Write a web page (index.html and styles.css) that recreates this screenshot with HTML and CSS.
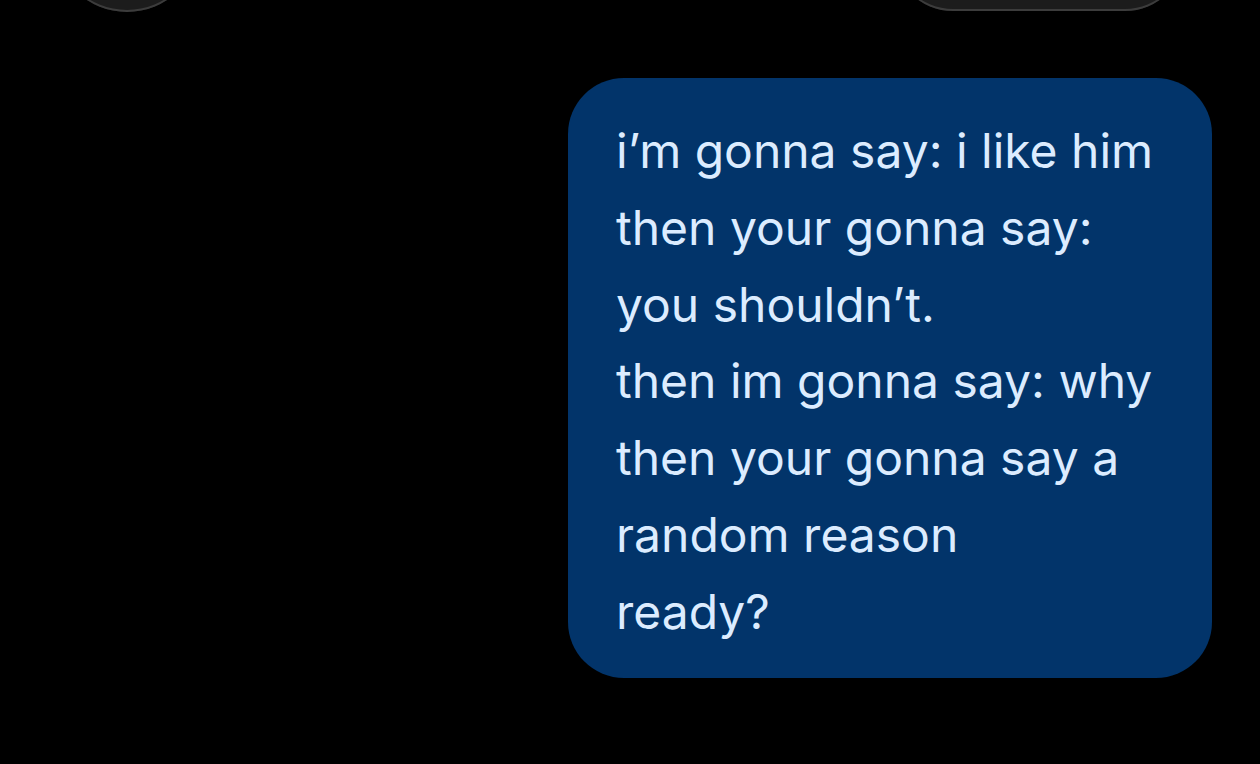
FILE: index.html
```html
<!DOCTYPE html>
<html>
<head>
<meta charset="utf-8">
<link rel="stylesheet" href="styles.css">
</head>
<body>
<header class="topbar">
  <div class="back-btn"></div>
  <div class="contact-pill"></div>
</header>
<main class="thread">
  <div class="bubble sent">
    <div class="line">i’m gonna say: i like him</div>
    <div class="line">then your gonna say:</div>
    <div class="line">you shouldn’t.</div>
    <div class="line">then im gonna say: why</div>
    <div class="line">then your gonna say a</div>
    <div class="line">random reason</div>
    <div class="line">ready?</div>
  </div>
</main>
</body>
</html>
```
FILE: styles.css
```css
html, body {
  margin: 0;
  padding: 0;
  background: #000;
  width: 1260px;
  height: 764px;
  overflow: hidden;
}
body {
  position: relative;
  font-family: Inter, "Liberation Sans", Arial, sans-serif;
}
.topbar {
  position: absolute;
  top: 0;
  left: 0;
  width: 100%;
  height: 0;
}
.back-btn {
  position: absolute;
  left: 54px;
  top: -134px;
  width: 146px;
  height: 146px;
  border-radius: 50%;
  background: #1c1c1c;
  box-shadow: inset 0 -1px 0 1px #3c3c3c;
}
.contact-pill {
  position: absolute;
  left: 893px;
  top: -110px;
  width: 292px;
  height: 121px;
  border-radius: 60px;
  background: #1c1c1c;
  box-shadow: inset 0 -1px 0 1px #3c3c3c;
}
.thread {
  display: flex;
  flex-direction: column;
  align-items: flex-end;
  padding: 78px 48px 0 0;
}
.bubble {
  box-sizing: border-box;
  width: 644px;
  height: 600px;
  padding: 35px 20px 0 48px;
  border-radius: 56px;
  background: #02346a;
  color: #dcecff;
  font-size: 48px;
  line-height: 76.8px;
  white-space: nowrap;
}
```
